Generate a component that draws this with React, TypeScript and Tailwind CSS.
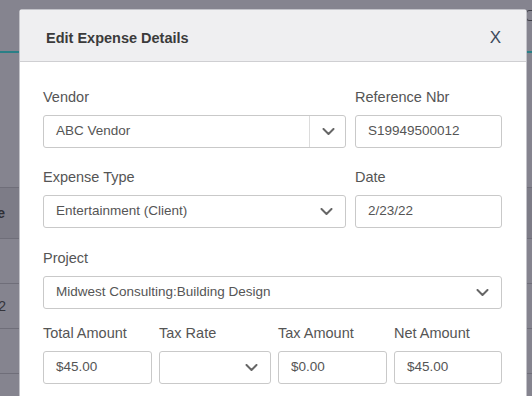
import React from "react";

// ── Small pieces ─────────────────────────────────────────────────────────────

function Chevron() {
  return (
    <svg width="13" height="7" viewBox="0 0 13 7" fill="none">
      <path
        d="M1.5 1 L6.5 6 L11.5 1"
        stroke="#666"
        strokeWidth="2"
        strokeLinecap="round"
        strokeLinejoin="round"
      />
    </svg>
  );
}

function Label({ children }: { children: React.ReactNode }) {
  return <div className="text-[14.5px] leading-[18px] text-[#555] mb-[9px] whitespace-nowrap">{children}</div>;
}

function TextBox({ value }: { value: string }) {
  return (
    <div className="h-[33px] border border-[#c9c9c9] rounded-[3px] pl-[12px] flex items-center text-[13.5px] text-[#555] bg-white">
      {value}
    </div>
  );
}

function SelectBox({ value, divider }: { value: string; divider?: boolean }) {
  return (
    <div className="h-[33px] border border-[#c9c9c9] rounded-[3px] flex items-center text-[13.5px] text-[#555] bg-white">
      <span className="flex-1 pl-[12px] whitespace-nowrap overflow-hidden">{value}</span>
      {divider ? (
        <div className="h-full w-[36px] border-l border-[#dcdcdc] flex items-center justify-center pl-[1px]">
          <Chevron />
        </div>
      ) : (
        <div className="pr-[12px] flex items-center">
          <Chevron />
        </div>
      )}
    </div>
  );
}

// ── Page behind the modal ───────────────────────────────────────────────────

function Backdrop() {
  return (
    <div className="w-full h-[396px] bg-[#85848f] flex flex-col overflow-hidden">
      <div className="h-[51px] flex justify-end pt-[10px]">
        <div className="w-[10px] h-[11px] -mr-[4px] border border-[#3f3f48] rounded-[3px]" />
      </div>
      <div className="h-[2px] bg-[#2a7f86]" />
      <div className="h-[135px] border-b border-[#6f6e79]" />
      <div className="h-[51px] bg-[#7d7c87] border-b border-[#6f6e79] flex items-center">
        <div className="w-[5px] overflow-hidden flex justify-end">
          <span className="text-[14px] font-bold text-[#2f2f36] whitespace-nowrap">Code</span>
        </div>
      </div>
      <div className="h-[45px] border-b border-[#6f6e79]" />
      <div className="h-[45px] border-b border-[#6f6e79] flex items-center">
        <div className="w-[6px] overflow-hidden flex justify-end">
          <span className="text-[14px] text-[#35353c] whitespace-nowrap">12</span>
        </div>
      </div>
      <div className="h-[45px] border-b border-[#6f6e79]" />
      <div className="flex-1" />
    </div>
  );
}

// ── Modal ────────────────────────────────────────────────────────────────────

export default function App() {
  return (
    <div className="relative w-[532px] h-[396px] overflow-hidden" style={{ fontFamily: '"Liberation Sans", Arial, sans-serif' }}>
      <Backdrop />

      <div className="absolute left-[19px] top-[9px] w-[508px] h-[400px] bg-white border border-[#c3c3c9] rounded-t-[3px]">
        {/* Header */}
        <div className="h-[52px] bg-[#efeff1] border-b border-[#cfcfd2] flex items-start justify-between pt-[19px] pl-[26px] pr-[25px]">
          <h2 className="text-[14.5px] leading-[18px] font-bold text-[#3b3b3b]">Edit Expense Details</h2>
          <span className="text-[17px] leading-[20px] text-[#3d4a5c] -mt-[1px]">X</span>
        </div>

        {/* Body */}
        <div className="pl-[23px] pr-[24px] pt-[26px]">
          <div className="grid grid-cols-[303px_1fr] gap-x-[9px]">
            <div>
              <Label>Vendor</Label>
              <SelectBox value="ABC Vendor" divider />
            </div>
            <div>
              <Label>Reference Nbr</Label>
              <TextBox value="S19949500012" />
            </div>
          </div>

          <div className="grid grid-cols-[303px_1fr] gap-x-[9px] mt-[20px]">
            <div>
              <Label>Expense Type</Label>
              <SelectBox value="Entertainment (Client)" />
            </div>
            <div>
              <Label>Date</Label>
              <TextBox value="2/23/22" />
            </div>
          </div>

          <div className="mt-[21px]">
            <Label>Project</Label>
            <SelectBox value="Midwest Consulting:Building Design" />
          </div>

          <div className="grid grid-cols-[109px_112px_109px_1fr] gap-x-[7px] mt-[15px]">
            <div>
              <Label>Total Amount</Label>
              <TextBox value="$45.00" />
            </div>
            <div>
              <Label>Tax Rate</Label>
              <SelectBox value="" />
            </div>
            <div>
              <Label>Tax Amount</Label>
              <TextBox value="$0.00" />
            </div>
            <div>
              <Label>Net Amount</Label>
              <TextBox value="$45.00" />
            </div>
          </div>
        </div>
      </div>
    </div>
  );
}
